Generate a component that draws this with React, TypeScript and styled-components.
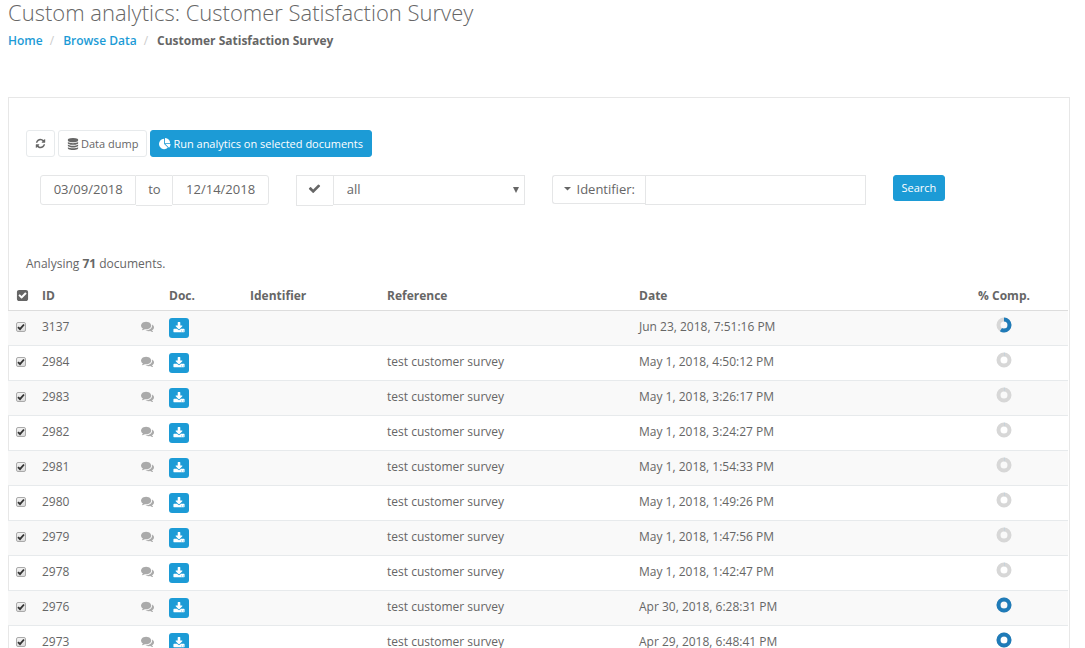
import React from "react";
import styled, { createGlobalStyle } from "styled-components";

const GlobalStyle = createGlobalStyle`
  *, *::before, *::after { box-sizing: border-box; }
  body {
    margin: 0;
    background: #fff;
    color: #666;
    font-family: "Open Sans", "Helvetica Neue", Arial, sans-serif;
    font-size: 13px;
    line-height: 18px;
  }
  button, input, select { font: inherit; color: inherit; }
`;

const blue = "#1c9bd6";
const line = "#e5e6e7";

/* ---------- icons ---------- */

const paths = {
  refresh:
    "M1639 1056q0 5-1 7-64 268-268 434.5t-478 166.5q-146 0-282.5-55t-243.5-157l-129 129q-19 19-45 19t-45-19-19-45v-448q0-26 19-45t45-19h448q26 0 45 19t19 45-19 45l-137 137q71 66 161 102t187 36q134 0 250-65t186-179q11-17 53-117 8-23 30-23h192q13 0 22.500 9.500t9.500 22.500zm25-800v448q0 26-19 45t-45 19h-448q-26 0-45-19t-19-45 19-45l138-138q-148-137-349-137-134 0-250 65t-186 179q-11 17-53 117-8 23-30 23h-199q-13 0-22.500-9.500t-9.500-22.500v-7q65-268 270-434.500t480-166.500q146 0 284 55.500t245 156.500l130-129q19-19 45-19t45 19 19 45z",
  database:
    "M896 768q237 0 443-43t325-127v170q0 69-103 128t-280 93.5-385 34.5-385-34.5-280-93.5-103-128v-170q119 84 325 127t443 43zm0 768q237 0 443-43t325-127v170q0 69-103 128t-280 93.5-385 34.5-385-34.5-280-93.5-103-128v-170q119 84 325 127t443 43zm0-384q237 0 443-43t325-127v170q0 69-103 128t-280 93.5-385 34.5-385-34.5-280-93.5-103-128v-170q119 84 325 127t443 43zm0-1152q208 0 385 34.5t280 93.5 103 128v128q0 69-103 128t-280 93.5-385 34.5-385-34.5-280-93.5-103-128v-128q0-69 103-128t280-93.5 385-34.5z",
  pie:
    "M768 890l546 546q-106 108-247.5 168t-298.5 60q-209 0-385.5-103t-279.5-279.5-103-385.500 103-385.500 279.500-279.500 385.500-103v762zm187 6h773q0 157-60 298.500t-168 247.500zm709-128h-768v-768q209 0 385.500 103t279.500 279.500 103 385.500z",
  check:
    "M1671 566q0 40-28 68l-724 724-136 136q-28 28-68 28t-68-28l-136-136-362-362q-28-28-28-68t28-68l136-136q28-28 68-28t68 28l294 295 656-657q28-28 68-28t68 28l136 136q28 28 28 68z",
  comments:
    "M1408 768q0 139-94 257t-256.500 186.500-353.500 68.500q-86 0-176-16-124 88-278 128-36 9-86 16h-3q-11 0-20.500-8t-11.500-21q-1-3-1-6.500t.5-6.500 2-6l2.500-5t3.500-5.500 4-5 4.500-5 4-4.500q5-6 23-25t26-29.500 22.500-29 25-38.500 20.500-44q-124-72-195-177t-71-224q0-139 94-257t256.500-186.500 353.500-68.500 353.500 68.500 256.500 186.500 94 257zm384 256q0 120-71 224.500t-195 176.500q10 24 20.500 44t25 38.500 22.500 29 26 29.500 23 25q1 1 4 4.500t4.500 5 4 5 3.500 5.500l2.500 5t2 6 .5 6.500-1 6.500q-3 14-13 22t-22 7q-50-7-86-16-154-40-278-128-90 16-176 16-271 0-472-132 58 4 88 4 161 0 309-45t264-129q125-92 192-212t67-254q0-77-23-152 129 71 204 178t75 230z",
  download:
    "M1344 1344q0-26-19-45t-45-19-45 19-19 45 19 45 45 19 45-19 19-45zm256 0q0-26-19-45t-45-19-45 19-19 45 19 45 45 19 45-19 19-45zm128-224v320q0 40-28 68t-68 28h-1472q-40 0-68-28t-28-68v-320q0-40 28-68t68-28h465l135 136q58 56 136 56t136-56l136-136h464q40 0 68 28t28 68zm-325-569q17 41-14 70l-448 448q-18 19-45 19t-45-19l-448-448q-31-29-14-70 17-39 59-39h256v-448q0-26 19-45t45-19h256q26 0 45 19t19 45v448h256q42 0 59 39z",
  checkSquare:
    "M813 1299l614-614q19-19 19-45t-19-45l-102-102q-19-19-45-19t-45 19l-467 467-211-211q-19-19-45-19t-45 19l-102 102q-19 19-19 45t19 45l358 358q19 19 45 19t45-19zm851-883v960q0 119-84.500 203.500t-203.500 84.500h-960q-119 0-203.500-84.500t-84.500-203.500v-960q0-119 84.500-203.500t203.500-84.500h960q119 0 203.500 84.500t84.500 203.500z",
};

const Svg = styled.svg`
  display: block;
  flex: none;
  fill: currentColor;
`;

function Icon({ name, size = 12 }: { name: keyof typeof paths; size?: number }) {
  return (
    <Svg width={size} height={size} viewBox="0 0 1792 1792" aria-hidden="true">
      <path d={paths[name]} />
    </Svg>
  );
}

/* ---------- page head ---------- */

const Page = styled.div`
  padding: 0 15px 0 8px;
`;

const Title = styled.h1`
  margin: 0;
  font-size: 22px;
  line-height: 24px;
  font-weight: 300;
`;

const Breadcrumb = styled.ol`
  display: flex;
  margin: 8px 0 47px;
  padding: 0;
  list-style: none;
  font-size: 12px;
`;

const Crumb = styled.li`
  & + &::before {
    content: "/";
    padding: 0 9px 0 7px;
    color: #ccc;
  }
`;

const CrumbLink = styled.a`
  color: ${blue};
  font-weight: 600;
  text-decoration: none;
`;

/* ---------- panel, toolbar and filters ---------- */

const Panel = styled.main`
  border: 1px solid #e7e7e7;
  padding-top: 32px;
`;

const Toolbar = styled.div`
  display: flex;
  gap: 3px;
  padding: 0 17px;
`;

const Button = styled.button<{ $primary?: boolean }>`
  display: inline-flex;
  align-items: center;
  gap: 2px;
  height: 27px;
  padding: 0 8px;
  border: 1px solid ${(p) => (p.$primary ? blue : "#e7eaec")};
  border-radius: 3px;
  background: ${(p) => (p.$primary ? blue : "#fff")};
  color: ${(p) => (p.$primary ? "#fff" : "inherit")};
  font-size: 11px;
  white-space: nowrap;
`;

const Filters = styled.form`
  display: grid;
  grid-template-columns: repeat(12, 1fr);
  column-gap: 27px;
  align-items: start;
  margin: 18px 33px 49px 31px;
`;

const Group = styled.div<{ $span: number }>`
  grid-column: span ${(p) => p.$span};
  display: flex;
  align-items: flex-start;
  min-width: 0;
`;

const Field = styled.input<{ $round?: "left" | "right" }>`
  flex: 1;
  min-width: 0;
  width: 0;
  height: 30px;
  padding: 0 12px 2px;
  border: 1px solid ${line};
  border-radius: ${(p) =>
    p.$round === "left" ? "3px 0 0 3px" : p.$round === "right" ? "0 3px 3px 0" : "0"};
  background: #fff;
  text-align: ${(p) => (p.$round ? "center" : "left")};
`;

const Addon = styled.span`
  display: flex;
  justify-content: center;
  align-items: center;
  width: 36px;
  height: 31px;
  padding-bottom: 4px;
  border: 1px solid ${line};
  border-width: 1px 0;
`;

const IconAddon = styled.label`
  display: flex;
  justify-content: center;
  align-items: center;
  width: 37px;
  height: 31px;
  padding-bottom: 4px;
  border: 1px solid ${line};
  border-right: 0;
`;

const SelectBox = styled.div`
  flex: 1;
  display: grid;
  align-items: center;
  min-width: 0;
`;

const Select = styled.select`
  grid-area: 1 / 1;
  width: 100%;
  height: 30px;
  padding: 0 13px 2px;
  appearance: none;
  border: 1px solid ${line};
  border-radius: 0;
  background: #fff;
`;

const SelectArrow = styled(Svg)`
  grid-area: 1 / 1;
  justify-self: end;
  margin-right: 6px;
  pointer-events: none;
`;

const FieldMenu = styled.button`
  display: flex;
  align-items: center;
  gap: 6px;
  width: 93px;
  height: 29px;
  padding: 0 0 1px 11px;
  border: 1px solid ${line};
  border-right: 0;
  border-radius: 3px 0 0 3px;
  background: #fff;
  white-space: nowrap;
`;

const SearchButton = styled(Button)`
  height: 26px;
`;

const Summary = styled.p`
  margin: 0 17px 7px;
  font-size: 12px;
`;

/* ---------- table ---------- */

const Table = styled.table`
  width: 100%;
  margin-left: -1px;
  table-layout: fixed;
  border-collapse: collapse;
`;

const Col = styled.col<{ $w?: string }>`
  width: ${(p) => p.$w ?? "auto"};
`;

const Th = styled.th<{ $center?: boolean }>`
  height: 30px;
  padding: 2px 8px 0;
  border-bottom: 1px solid #ddd;
  font-size: 12px;
  font-weight: 700;
  text-align: ${(p) => (p.$center ? "center" : "left")};
`;

const Row = styled.tr`
  &:nth-child(odd) {
    background: #f9f9f9;
  }
`;

const Td = styled.td<{ $muted?: boolean; $center?: boolean }>`
  height: 35px;
  padding: 0 8px 2px;
  border-bottom: 1px solid #e7eaec;
  font-size: 12px;
  text-align: ${(p) => (p.$center ? "center" : "left")};
  color: ${(p) => (p.$muted ? "#aaa" : "inherit")};
`;

const Tick = styled.input`
  display: block;
  width: 10px;
  height: 10px;
  margin: 0;
  appearance: none;
  border: 1px solid #aaa;
  border-radius: 2px;
  background: linear-gradient(#f2f2f2, #dcdcdc);

  &:checked {
    background:
      url("data:image/svg+xml,%3Csvg xmlns='http://www.w3.org/2000/svg' viewBox='0 0 8 8'%3E%3Cpath d='M1 4.200 3 6.200 7 1.500' fill='none' stroke='%23333' stroke-width='1.900'/%3E%3C/svg%3E")
        center / 8px 8px no-repeat,
      linear-gradient(#f2f2f2, #dcdcdc);
  }
`;

const IconButton = styled.button`
  display: flex;
  align-items: center;
  justify-content: center;
  width: 20px;
  height: 20px;
  margin: 0;
  padding: 0;
  border: 0;
  background: none;
`;

const DownloadButton = styled(IconButton)`
  margin-top: 2px;
  border-radius: 3px;
  background: ${blue};
  color: #fff;
`;

const HeadToggle = styled(IconButton)`
  width: 12px;
`;

const DonutSvg = styled.svg`
  display: block;
  margin: 0 auto 3px;
`;

function Donut({ value }: { value: number }) {
  const length = 2 * Math.PI * 5.5;
  return (
    <DonutSvg width="16" height="16" viewBox="0 0 16 16" role="img" aria-label={`${value}% complete`}>
      <circle cx="8" cy="8" r="5.5" fill="none" stroke="#d7d7d7" strokeWidth="4" />
      <circle
        cx="8"
        cy="8"
        r="5.5"
        fill="none"
        stroke={value < 2 ? "#a9cbe3" : "#1f7bb8"}
        strokeWidth="4"
        strokeDasharray={`${(length * value) / 100} ${length}`}
        transform="rotate(-90 8 8)"
      />
    </DonutSvg>
  );
}

const survey = "test customer survey";
const documents = [
  { id: 3137, reference: "", date: "Jun 23, 2018, 7:51:16 PM", complete: 58 },
  { id: 2984, reference: survey, date: "May 1, 2018, 4:50:12 PM", complete: 1 },
  { id: 2983, reference: survey, date: "May 1, 2018, 3:26:17 PM", complete: 1 },
  { id: 2982, reference: survey, date: "May 1, 2018, 3:24:27 PM", complete: 1 },
  { id: 2981, reference: survey, date: "May 1, 2018, 1:54:33 PM", complete: 1 },
  { id: 2980, reference: survey, date: "May 1, 2018, 1:49:26 PM", complete: 1 },
  { id: 2979, reference: survey, date: "May 1, 2018, 1:47:56 PM", complete: 1 },
  { id: 2978, reference: survey, date: "May 1, 2018, 1:42:47 PM", complete: 1 },
  { id: 2976, reference: survey, date: "Apr 30, 2018, 6:28:31 PM", complete: 100 },
  { id: 2973, reference: survey, date: "Apr 29, 2018, 6:48:41 PM", complete: 100 },
];

export default function App() {
  return (
    <Page>
      <GlobalStyle />
      <Title>Custom analytics: Customer Satisfaction Survey</Title>
      <nav aria-label="Breadcrumb">
        <Breadcrumb>
          <Crumb><CrumbLink href="#home">Home</CrumbLink></Crumb>
          <Crumb><CrumbLink href="#browse">Browse Data</CrumbLink></Crumb>
          <Crumb aria-current="page"><strong>Customer Satisfaction Survey</strong></Crumb>
        </Breadcrumb>
      </nav>

      <Panel>
        <Toolbar>
          <Button type="button" aria-label="Refresh"><Icon name="refresh" size={11} /></Button>
          <Button type="button"><Icon name="database" />Data dump</Button>
          <Button type="button" $primary><Icon name="pie" />Run analytics on selected documents</Button>
        </Toolbar>

        <Filters onSubmit={(e) => e.preventDefault()}>
          <Group $span={3}>
            <Field $round="left" aria-label="From date" defaultValue="03/09/2018" />
            <Addon>to</Addon>
            <Field $round="right" aria-label="To date" defaultValue="12/14/2018" />
          </Group>
          <Group $span={3}>
            <IconAddon htmlFor="status" aria-label="Status"><Icon name="check" size={13} /></IconAddon>
            <SelectBox>
              <Select id="status" defaultValue="all">
                <option value="all">all</option>
              </Select>
              <SelectArrow width="6" height="6" viewBox="0 0 6 6" aria-hidden="true">
                <path d="M0 0h6L3 6z" />
              </SelectArrow>
            </SelectBox>
          </Group>
          <Group $span={4}>
            <FieldMenu type="button">
              <Svg width="7" height="4" viewBox="0 0 7 4" aria-hidden="true"><path d="M0 0h7L3.500 3.500z" /></Svg>
              Identifier:
            </FieldMenu>
            <Field aria-label="Identifier" />
          </Group>
          <Group $span={2}>
            <SearchButton type="submit" $primary>Search</SearchButton>
          </Group>
        </Filters>

        <Summary>Analysing <strong>71</strong> documents.</Summary>

        <Table>
          <colgroup>
            <Col $w="26px" />
            <Col $w="99px" />
            <Col $w="28px" />
            <Col $w="81px" />
            <Col $w="137px" />
            <Col $w="252px" />
            <Col />
            <Col $w="128px" />
          </colgroup>
          <thead>
            <tr>
              <Th><HeadToggle type="button" aria-label="Select all"><Icon name="checkSquare" size={13} /></HeadToggle></Th>
              <Th>ID</Th>
              <Th aria-label="Comments" />
              <Th>Doc.</Th>
              <Th>Identifier</Th>
              <Th>Reference</Th>
              <Th>Date</Th>
              <Th $center>% Comp.</Th>
            </tr>
          </thead>
          <tbody>
            {documents.map((doc) => (
              <Row key={doc.id}>
                <Td><Tick type="checkbox" defaultChecked aria-label={`Select ${doc.id}`} /></Td>
                <Td>{doc.id}</Td>
                <Td $muted><Icon name="comments" size={13} /></Td>
                <Td><DownloadButton type="button" aria-label="Download"><Icon name="download" size={12} /></DownloadButton></Td>
                <Td />
                <Td>{doc.reference}</Td>
                <Td>{doc.date}</Td>
                <Td $center><Donut value={doc.complete} /></Td>
              </Row>
            ))}
          </tbody>
        </Table>
      </Panel>
    </Page>
  );
}
